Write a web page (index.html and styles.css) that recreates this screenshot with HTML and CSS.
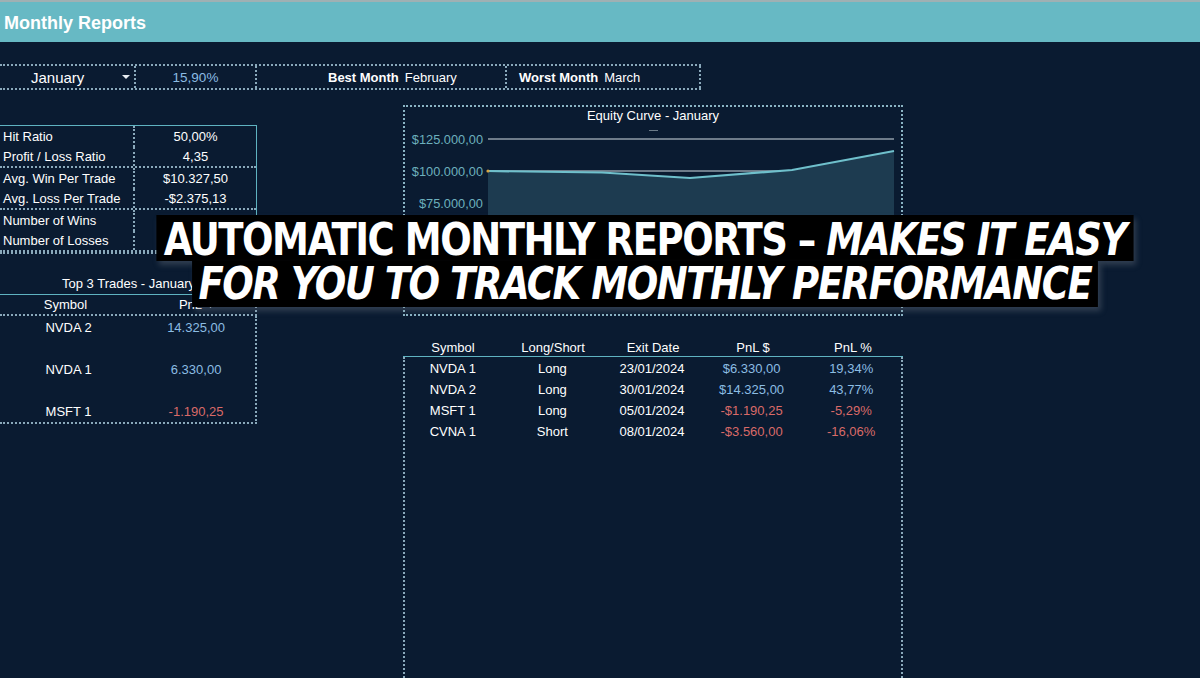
FILE: index.html
```html
<!DOCTYPE html>
<html>
<head>
<meta charset="utf-8">
<title>Monthly Reports</title>
<link rel="stylesheet" href="styles.css">
</head>
<body>
<div class="page">
  <div class="header">Monthly Reports</div>

  <div class="toprow">
    <div class="cell month">January<span class="caret"></span></div>
    <div class="cell pct">15,90%</div>
    <div class="cell best"><b>Best Month</b>February</div>
    <div class="cell worst"><b>Worst Month</b>March</div>
  </div>

  <div class="content">
    <div class="leftcol">
      <div class="stats">
        <div class="srow"><div class="k">Hit Ratio</div><div class="v">50,00%</div></div>
        <div class="srow sep"><div class="k">Profit / Loss Ratio</div><div class="v">4,35</div></div>
        <div class="srow"><div class="k">Avg. Win Per Trade</div><div class="v">$10.327,50</div></div>
        <div class="srow sep"><div class="k">Avg. Loss Per Trade</div><div class="v">-$2.375,13</div></div>
        <div class="srow"><div class="k">Number of Wins</div><div class="v">2</div></div>
        <div class="srow sep"><div class="k">Number of Losses</div><div class="v">2</div></div>
      </div>

      <div class="top3">
        <div class="t3title">Top 3 Trades - January</div>
        <div class="t3head"><div class="c">Symbol</div><div class="c">PnL <svg class="sorticon" width="9" height="9" viewBox="0 0 9 9"><path d="M2 3.5 L4.5 6 L7 3.5" fill="none" stroke="#b8c6d0" stroke-width="1.3"/></svg></div></div>
        <div class="t3body">
          <div class="t3row first"><div class="c">NVDA 2</div><div class="c pos">14.325,00</div></div>
          <div class="t3row"><div class="c">NVDA 1</div><div class="c pos">6.330,00</div></div>
          <div class="t3row"><div class="c">MSFT 1</div><div class="c neg">-1.190,25</div></div>
        </div>
      </div>
    </div>

    <div class="rightcol">
      <div class="chart">
        <div class="ctitle">Equity Curve - January</div>
        <div class="cdash"></div>
        <svg class="csvg" width="498" height="190" viewBox="0 0 498 190">
          <g class="grid">
            <line x1="83" y1="13" x2="489" y2="13"/>
            <line x1="83" y1="45" x2="489" y2="45"/>
            <line x1="83" y1="77" x2="489" y2="77"/>
            <line x1="83" y1="109" x2="489" y2="109"/>
            <line x1="83" y1="141" x2="489" y2="141"/>
            <line x1="83" y1="173" x2="489" y2="173"/>
          </g>
          <polygon class="area" points="83,45 197,46.5 285,52 387,44 489,25 489,173 83,173"/>
          <polyline class="eline" points="83,45 197,46.5 285,52 387,44 489,25"/>
          <circle cx="83" cy="45" r="1.6" fill="#d9a441"/>
          <g class="ylab">
            <text x="78" y="17.5">$125.000,00</text>
            <text x="78" y="49.5">$100.000,00</text>
            <text x="78" y="81.5">$75.000,00</text>
            <text x="78" y="113.5">$50.000,00</text>
            <text x="78" y="145.5">$25.000,00</text>
            <text x="78" y="177.5">$0,00</text>
          </g>
        </svg>
      </div>

      <div class="trades">
        <div class="thead">
          <div class="c">Symbol</div><div class="c">Long/Short</div><div class="c">Exit Date</div><div class="c">PnL $</div><div class="c">PnL %</div>
        </div>
        <div class="tbody">
          <div class="trow"><div class="c">NVDA 1</div><div class="c">Long</div><div class="c">23/01/2024</div><div class="c pos">$6.330,00</div><div class="c pos">19,34%</div></div>
          <div class="trow"><div class="c">NVDA 2</div><div class="c">Long</div><div class="c">30/01/2024</div><div class="c pos">$14.325,00</div><div class="c pos">43,77%</div></div>
          <div class="trow"><div class="c">MSFT 1</div><div class="c">Long</div><div class="c">05/01/2024</div><div class="c neg">-$1.190,25</div><div class="c neg">-5,29%</div></div>
          <div class="trow"><div class="c">CVNA 1</div><div class="c">Short</div><div class="c">08/01/2024</div><div class="c neg">-$3.560,00</div><div class="c neg">-16,06%</div></div>
        </div>
      </div>
    </div>
  </div>

  <div class="overlay">
    <div class="oline l1">AUTOMATIC MONTHLY REPORTS – <i>MAKES IT EASY</i></div>
    <div class="oline l2"><i>FOR YOU TO TRACK MONTHLY PERFORMANCE</i></div>
  </div>
</div>
</body>
</html>
```

FILE: styles.css
```css
html, body {
  margin: 0;
  padding: 0;
  background: #0a1b31;
  height: 100%;
  overflow: hidden;
}
.page {
  position: relative;
  width: 1200px;
  height: 678px;
  overflow: hidden;
  font-family: "Liberation Sans", Arial, sans-serif;
  color: #ffffff;
  font-size: 13px;
  border-top: 2px solid #9fb0b3;
  box-sizing: border-box;
}
.header {
  height: 40px;
  background: #67b9c4;
  color: #ffffff;
  font-weight: bold;
  font-size: 18px;
  line-height: 42px;
  padding-left: 4px;
}

/* top selector row */
.toprow {
  margin-top: 22px;
  width: 701px;
  height: 22px;
  display: flex;
  border-top: 2px dotted #8aa9bb;
  border-bottom: 2px dotted #8aa9bb;
}
.cell {
  display: flex;
  align-items: center;
  border-right: 2px dotted #8aa9bb;
  box-sizing: border-box;
  height: 22px;
}
.month {
  width: 136px;
  font-size: 15px;
  padding-left: 31px;
  position: relative;
}
.caret {
  position: absolute;
  left: 122px;
  top: 9px;
  width: 0;
  height: 0;
  border-left: 4px solid transparent;
  border-right: 4px solid transparent;
  border-top: 4px solid #e6ecf0;
}
.pct {
  width: 121px;
  justify-content: center;
  color: #8cbde3;
  font-size: 13.5px;
}
.best {
  width: 250px;
  padding-left: 71px;
  font-size: 13px;
}
.best b, .worst b { margin-right: 6px; }
.worst {
  width: 194px;
  padding-left: 12px;
  font-size: 13px;
}

/* content */
.content {
  display: flex;
  align-items: flex-start;
  margin-top: 15px;
}
.leftcol {
  width: 257px;
  padding-top: 20px;
}
.rightcol {
  margin-left: 146px;
  width: 500px;
}

/* stats */
.stats {
  border-top: 1px solid #5fb3c1;
  border-right: 1px solid #5fb3c1;
  border-bottom: 2px dotted #8aa9bb;
  box-sizing: border-box;
}
.srow {
  display: flex;
  height: 21px;
  align-items: center;
  font-size: 13px;
}
.srow.sep { border-bottom: 2px dotted #8aa9bb; height: 19px; }
.srow .k { width: 135px; padding-left: 3px; border-right: 2px dotted #8aa9bb; height: 100%; display: flex; align-items: center; box-sizing: border-box; white-space: nowrap; }
.srow .v { flex: 1; text-align: center; }

/* top 3 */
.top3 { margin-top: 22px; }
.t3title {
  text-align: center;
  font-size: 13px;
  height: 18px;
  line-height: 16px;
  border-bottom: 1px solid #5fb3c1;
}
.t3head {
  display: flex;
  height: 19px;
  align-items: center;
  font-size: 13px;
  border-bottom: 2px dotted #8aa9bb;
  border-right: 2px dotted #8aa9bb;
}
.t3head .c, .t3row .c { width: 50%; text-align: center; }
.t3head .c:first-child, .t3row .c:first-child { width: 135px; }
.t3head .c:last-child { padding-left: 8px; box-sizing: border-box; }
.sorticon { vertical-align: -1px; margin-left: 1px; }
.t3body {
  border-right: 2px dotted #8aa9bb;
  border-bottom: 2px dotted #8aa9bb;
}
.t3row {
  display: flex;
  height: 42px;
  align-items: flex-end;
  padding-bottom: 3px;
  box-sizing: border-box;
  font-size: 13px;
}
.t3row.first { height: 22px; }
.t3row .c:first-child { padding-left: 6px; box-sizing: border-box; }
.t3row .c:last-child { padding-left: 6px; box-sizing: border-box; }
.pos { color: #8cbde3; }
.neg { color: #d96a68; }

/* chart */
.chart {
  height: 211px;
  border: 2px dotted #8ab4c4;
  box-sizing: border-box;
}
.ctitle {
  text-align: center;
  font-size: 13px;
  margin-top: 1px;
  height: 16px;
  line-height: 16px;
}
.cdash {
  width: 9px;
  height: 1px;
  background: #6c7b88;
  margin: 6px auto 0;
}
.csvg { display: block; margin-top: -5px; }
.grid line { stroke: #909ea8; stroke-width: 1.6; }
.area { fill: #1d3b50; }
.eline { fill: none; stroke: #6fc0cc; stroke-width: 2.2; }
.ylab text {
  fill: #6cb0bd;
  font-family: "Liberation Sans", Arial, sans-serif;
  font-size: 12.8px;
  text-anchor: end;
}

/* trades */
.trades { margin-top: 22px; }
.thead {
  display: flex;
  height: 18px;
  align-items: center;
  border-bottom: 1px solid #5fb3c1;
  font-size: 13px;
}
.thead .c, .trow .c { width: 100px; text-align: center; }
.tbody {
  height: 340px;
  border-left: 2px dotted #8aa9bb;
  border-right: 2px dotted #8aa9bb;
  padding-top: 1px;
}
.trow {
  display: flex;
  height: 21px;
  align-items: center;
  font-size: 13px;
  margin-left: -2px;
}

/* overlay */
.overlay {
  position: absolute;
  left: 145px;
  top: 213px;
  width: 1000px;
  display: flex;
  flex-direction: column;
  align-items: center;
  font-family: "DejaVu Sans Condensed", "DejaVu Sans", sans-serif;
  font-weight: bold;
  color: #ffffff;
  font-size: 45px;
  letter-spacing: -1.6px;
}
.oline {
  background: #000000;
  white-space: nowrap;
  box-shadow: 3px 4px 6px rgba(120, 130, 140, 0.35);
  transform: scaleX(0.915);
}
.l1 { height: 46px; line-height: 49px; padding: 0 8px; }
.l2 { height: 46px; line-height: 45px; padding: 0 7px; }
.oline i { font-style: italic; }
```
